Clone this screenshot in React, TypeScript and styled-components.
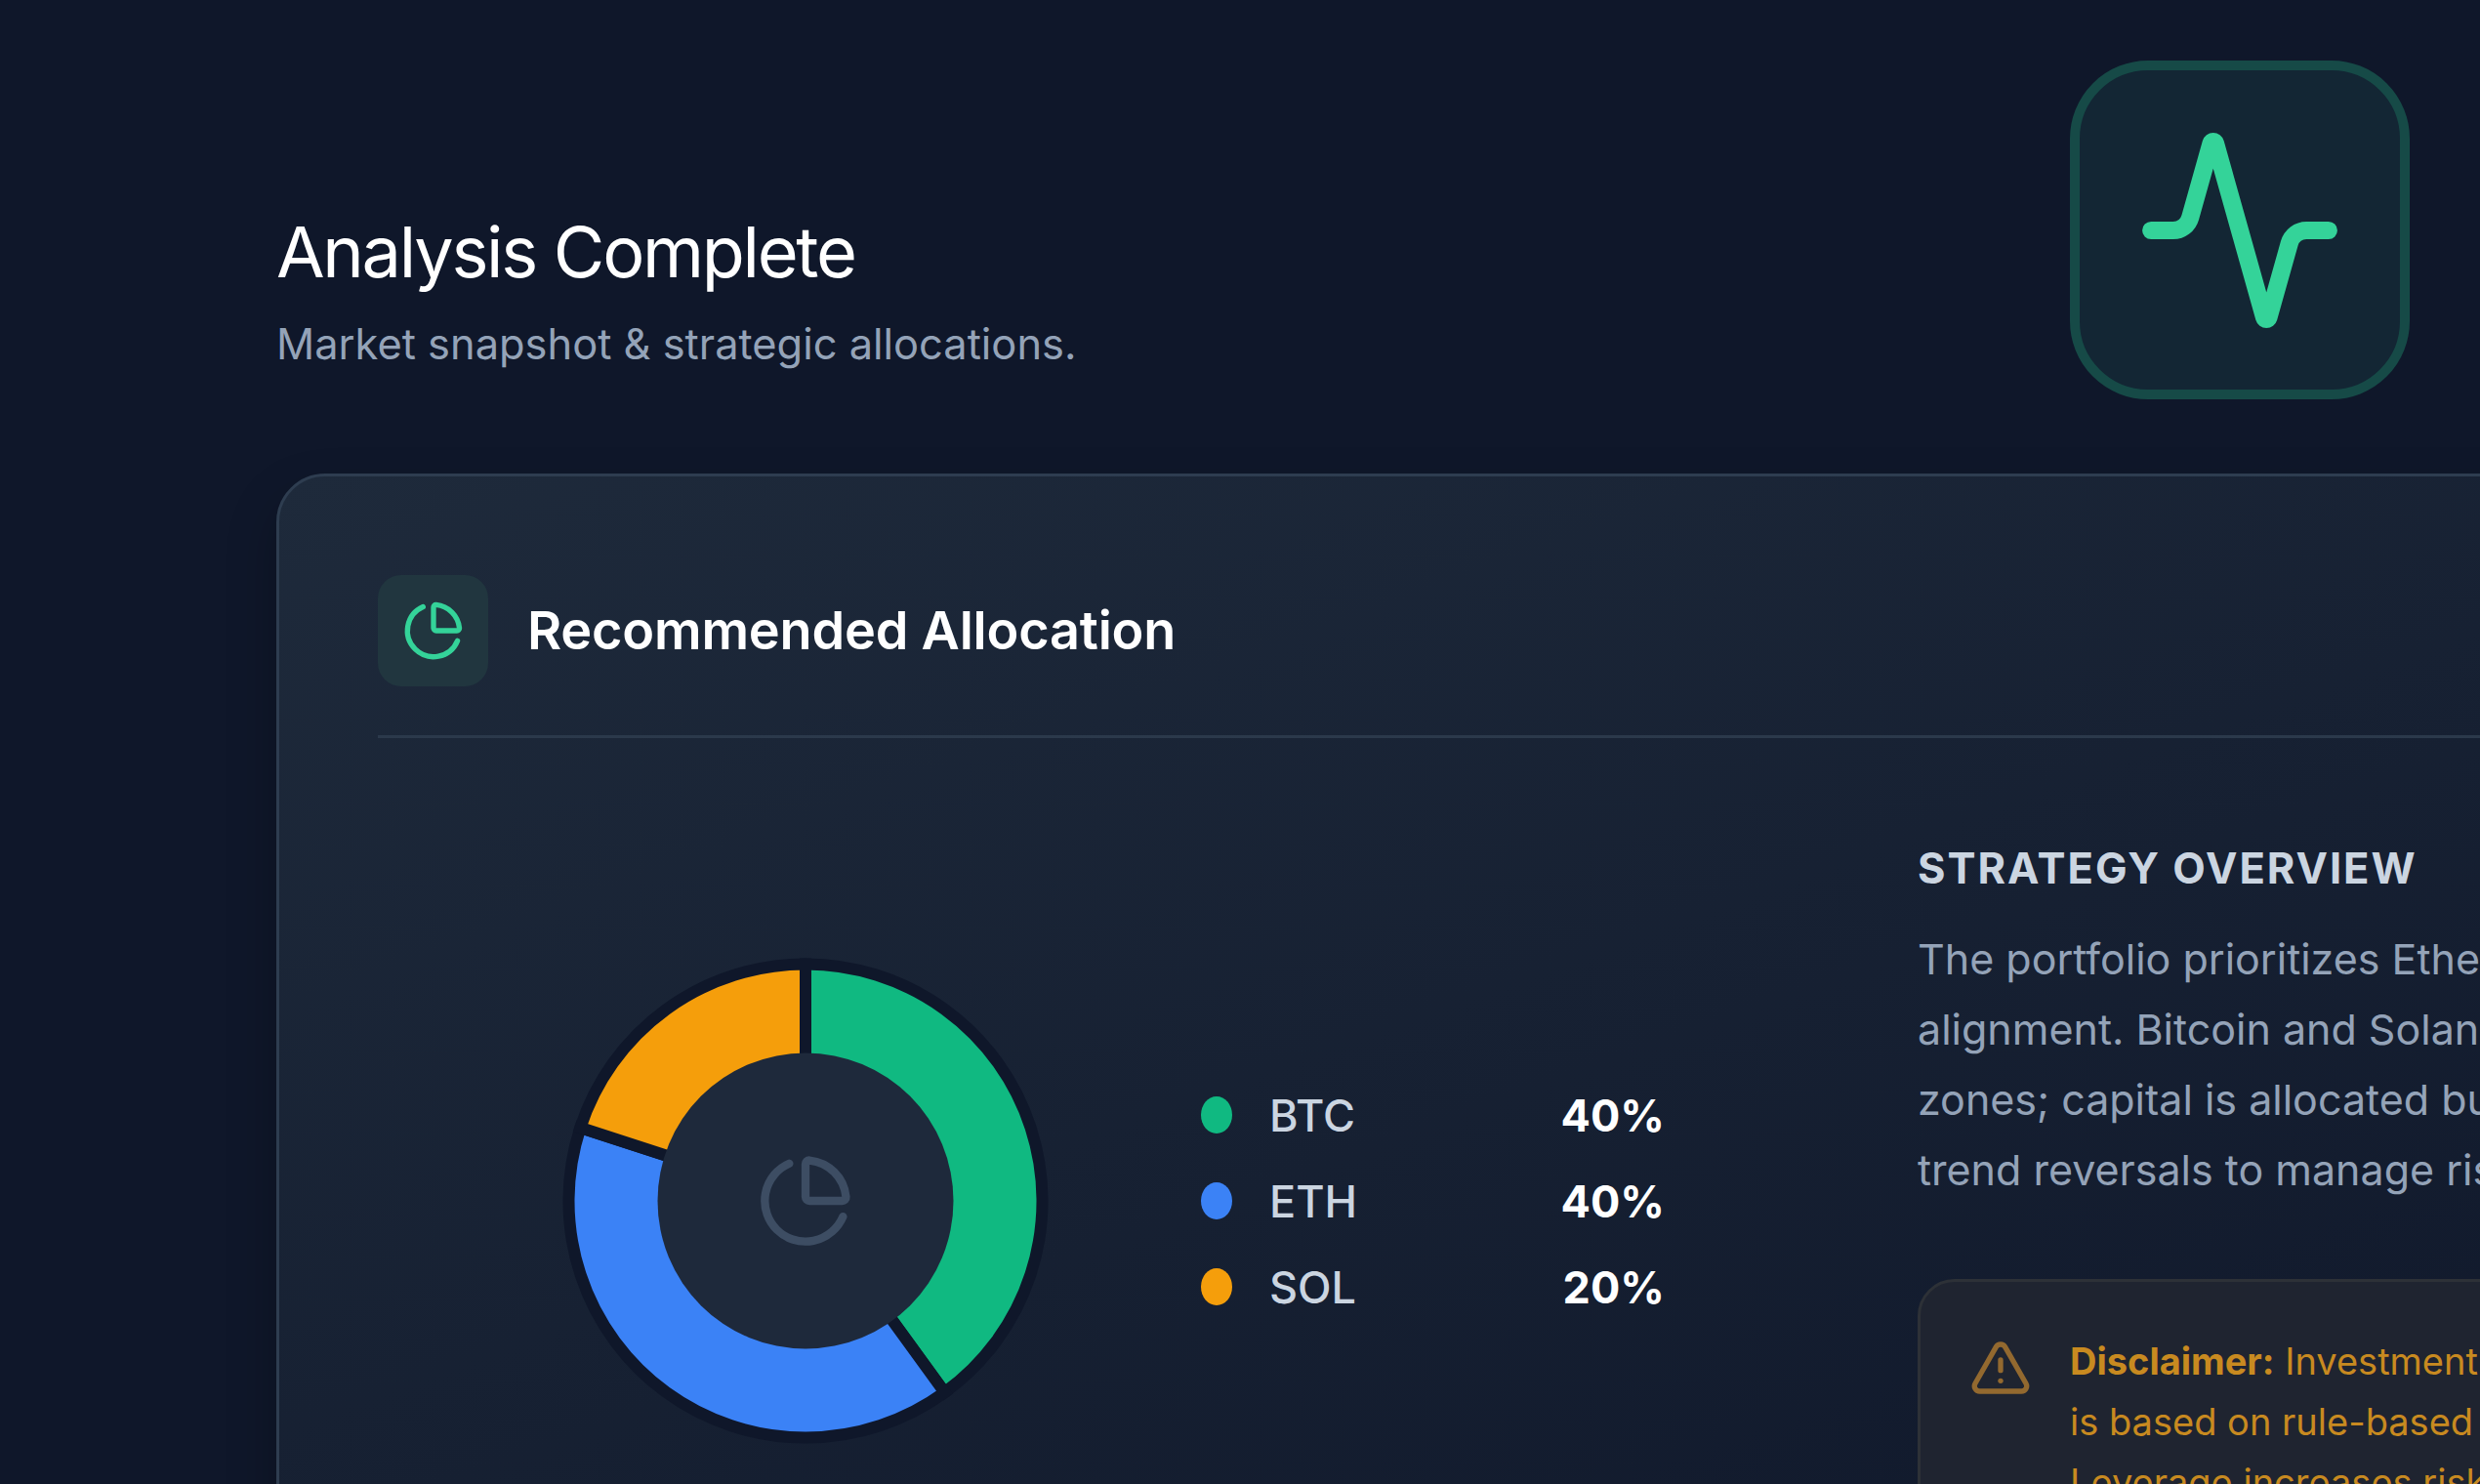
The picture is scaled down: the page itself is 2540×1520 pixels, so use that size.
import * as React from 'react';
import styled, { createGlobalStyle } from 'styled-components';
import { Activity, ChartPie, TriangleAlert } from 'lucide-react';

const GlobalStyle = createGlobalStyle`
    html, body {
        margin: 0;
        padding: 0;
        background: #0f172a;
        overflow: hidden;
    }
    body {
        font-family: Inter, "Liberation Sans", sans-serif;
    }
`;

const allocations = [
    { symbol: 'BTC', share: 40, color: '#10b981' },
    { symbol: 'ETH', share: 40, color: '#3b82f6' },
    { symbol: 'SOL', share: 20, color: '#f59e0b' },
];

const strategyLines = [
    'The portfolio prioritizes Ethereum',
    'alignment. Bitcoin and Solana',
    'zones; capital is allocated but',
    'trend reversals to manage risk.',
];

// donut is drawn around 250,250 in a 500 box
const polar = (radius: number, degrees: number) => {
    const rad = (degrees * Math.PI) / 180;
    return `${250 + radius * Math.sin(rad)} ${250 - radius * Math.cos(rad)}`;
};

const slicePath = (from: number, to: number) => {
    const large = to - from > 180 ? 1 : 0;
    return `M250 250 L${polar(242.5, from)} A242.5 242.5 0 ${large} 1 ${polar(242.5, to)} Z`;
};

const Donut = () => {
    let angle = 0;
    return (
        <DonutBox>
            <svg width="500" height="500" viewBox="0 0 500 500">
                {allocations.map((item) => {
                    const from = angle;
                    angle += item.share * 3.6;
                    return (
                        <path
                            key={item.symbol}
                            d={slicePath(from, angle)}
                            fill={item.color}
                            stroke="#0f172a"
                            strokeWidth={12}
                        />
                    );
                })}
                <circle cx="250" cy="250" r="151.5" fill="#1e293b" />
            </svg>
            <DonutCenter>
                <ChartPie size={100} color="#3d4d63" />
            </DonutCenter>
        </DonutBox>
    );
};

export default function App() {
    return (
        <Page>
            <GlobalStyle />
            <Header>
                <TitleBlock>
                    <Title>Analysis Complete</Title>
                    <Subtitle>Market snapshot &amp; strategic allocations.</Subtitle>
                </TitleBlock>
                <PulseTile>
                    <Activity size={218} color="#34d399" />
                </PulseTile>
            </Header>
            <Card>
                <CardHeader>
                    <CardBadge>
                        <ChartPie size={64} color="#34d399" />
                    </CardBadge>
                    <CardTitle>Recommended Allocation</CardTitle>
                </CardHeader>
                <CardBody>
                    <ChartArea>
                        <Donut />
                        <Legend>
                            {allocations.map((item) => (
                                <LegendRow key={item.symbol}>
                                    <Dot $color={item.color} />
                                    <Symbol>{item.symbol}</Symbol>
                                    <Share>{item.share}%</Share>
                                </LegendRow>
                            ))}
                        </Legend>
                    </ChartArea>
                    <Strategy>
                        <StrategyTitle>STRATEGY OVERVIEW</StrategyTitle>
                        <StrategyText>
                            {strategyLines.map((line) => (
                                <Line key={line}>{line}</Line>
                            ))}
                        </StrategyText>
                        <Disclaimer>
                            <WarningIcon>
                                <TriangleAlert size={64} color="#93692f" />
                            </WarningIcon>
                            <DisclaimerText>
                                <Line><strong>Disclaimer:</strong> Investment</Line>
                                <Line>is based on rule-based</Line>
                                <Line>Leverage increases risk</Line>
                            </DisclaimerText>
                        </Disclaimer>
                    </Strategy>
                </CardBody>
            </Card>
        </Page>
    );
}

const Page = styled.div`
    box-sizing: border-box;
    width: 2540px;
    height: 1520px;
    padding: 62px 0 0 283px;
    overflow: hidden;
    background: #0f172a;
`;

const Header = styled.div`
    display: flex;
    justify-content: space-between;
    align-items: flex-end;
    width: 2185px;
`;

const TitleBlock = styled.div`
    padding-bottom: 27px;
`;

const Title = styled.h1`
    margin: 0 0 21px;
    font-size: 72px;
    line-height: 86px;
    font-weight: 400;
    letter-spacing: -0.032em;
    color: #ffffff;
`;

const Subtitle = styled.p`
    margin: 0;
    font-size: 43.4px;
    line-height: 60px;
    font-weight: 400;
    color: #94a3b8;
`;

const PulseTile = styled.div`
    box-sizing: border-box;
    display: flex;
    align-items: center;
    justify-content: center;
    width: 348px;
    height: 347px;
    border: 10px solid #164a47;
    border-radius: 80px;
    background: #132634;
`;

const Card = styled.section`
    box-sizing: border-box;
    width: 2500px;
    height: 1400px;
    margin-top: 76px;
    padding: 101px;
    border: 3px solid #2e3d50;
    border-radius: 50px;
    background: linear-gradient(160deg, #1e2a3b 0%, #0f172a 90%);
    box-shadow: 0 25px 50px rgba(0, 0, 0, 0.25);
`;

const CardHeader = styled.div`
    display: flex;
    align-items: center;
    gap: 40px;
    padding-bottom: 50px;
    border-bottom: 3px solid #2b394b;
`;

const CardBadge = styled.div`
    display: flex;
    align-items: center;
    justify-content: center;
    width: 113px;
    height: 114px;
    border-radius: 24px;
    background: #21363f;
`;

const CardTitle = styled.h2`
    margin: 0;
    font-size: 54px;
    line-height: 72px;
    font-weight: 600;
    letter-spacing: -0.2px;
    color: #ffffff;
`;

const CardBody = styled.div`
    display: flex;
    align-items: flex-start;
`;

const ChartArea = styled.div`
    display: flex;
    align-items: center;
    gap: 155px;
    width: 1577px;
    padding: 224px 0 0 188px;
    box-sizing: border-box;
    flex-shrink: 0;
`;

const DonutBox = styled.div`
    position: relative;
    width: 500px;
    height: 500px;
    flex-shrink: 0;

    svg {
        display: block;
    }
`;

const DonutCenter = styled.div`
    position: absolute;
    inset: 0;
    display: flex;
    align-items: center;
    justify-content: center;
`;

const Legend = styled.div`
    display: flex;
    flex-direction: column;
    gap: 28px;
    width: 475px;
`;

const LegendRow = styled.div`
    display: flex;
    align-items: center;
    height: 60px;
`;

const Dot = styled.span<{ $color: string }>`
    width: 32px;
    height: 38px;
    border-radius: 50%;
    background: ${(props) => props.$color};
`;

const Symbol = styled.span`
    margin-left: 38px;
    font-size: 45px;
    font-weight: 500;
    color: #cbd5e1;
`;

const Share = styled.span`
    margin-left: auto;
    font-size: 45px;
    font-weight: 700;
    color: #ffffff;
`;

const Strategy = styled.div`
    flex: 1;
    min-width: 0;
    padding-top: 103px;
`;

const StrategyTitle = styled.h3`
    margin: 0 0 27px;
    font-size: 43.5px;
    line-height: 60px;
    font-weight: 700;
    letter-spacing: 0.045em;
    color: #cbd5e1;
`;

const StrategyText = styled.p`
    margin: 0;
    font-size: 43px;
    line-height: 72px;
    font-weight: 400;
    color: #94a3b8;
`;

const Line = styled.span`
    display: block;
    white-space: nowrap;
`;

const Disclaimer = styled.div`
    display: flex;
    gap: 39px;
    margin-top: 76px;
    padding: 50px;
    border: 3px solid #2d3137;
    border-radius: 38px;
    background: #1f2430;
`;

const WarningIcon = styled.div`
    flex-shrink: 0;
    height: 64px;
    margin-top: 6px;
`;

const DisclaimerText = styled.div`
    font-size: 38px;
    line-height: 62px;
    color: #c88a20;

    strong {
        font-weight: 700;
    }
`;
